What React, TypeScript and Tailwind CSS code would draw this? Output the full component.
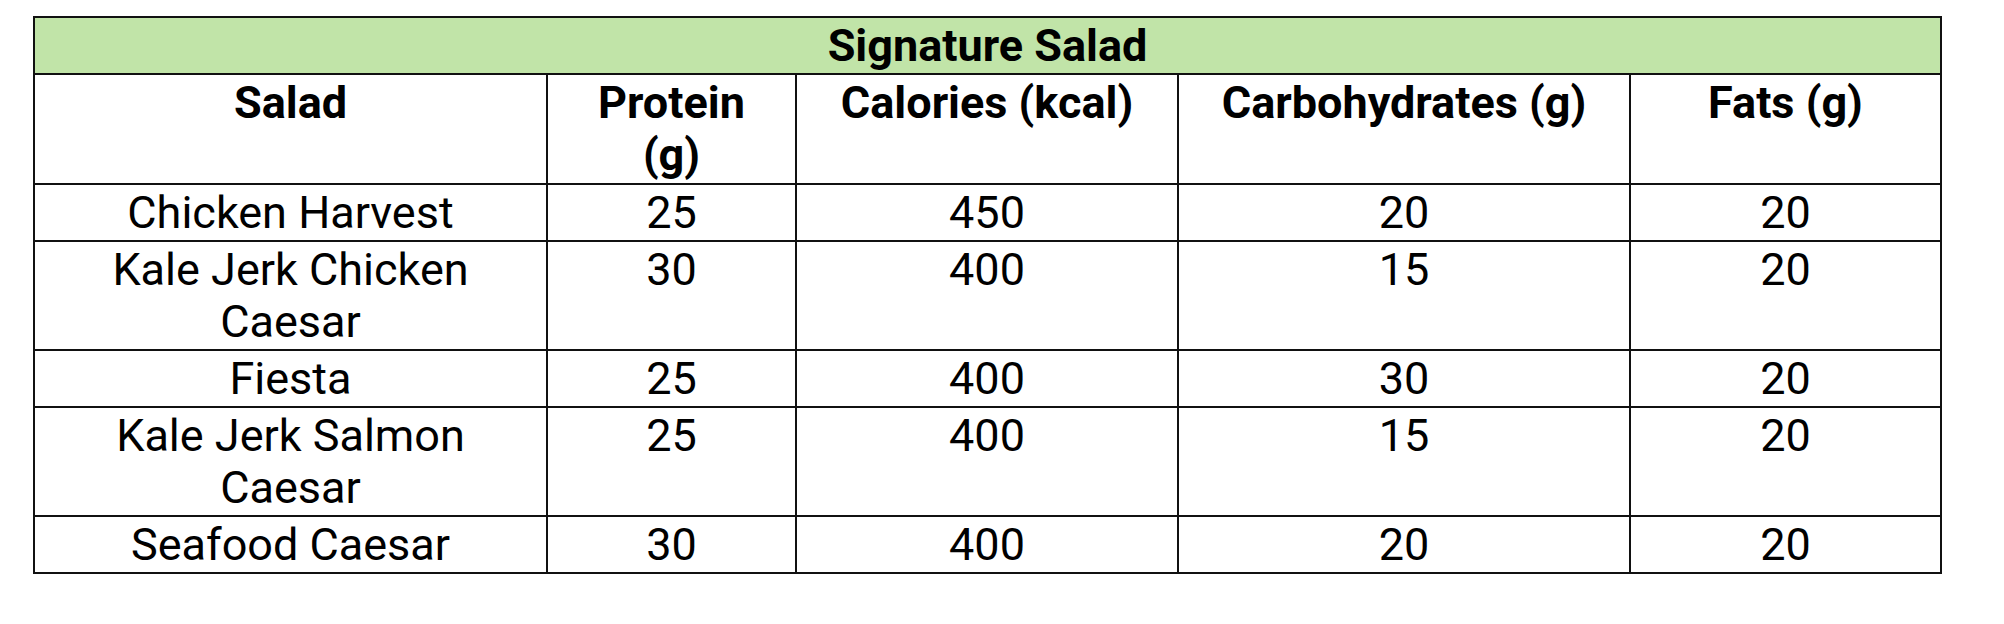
import React from 'react';

const rows = [
  { name: "Chicken Harvest", protein: 25, calories: 450, carbs: 20, fats: 20 },
  { name: "Kale Jerk Chicken Caesar", protein: 30, calories: 400, carbs: 15, fats: 20 },
  { name: "Fiesta", protein: 25, calories: 400, carbs: 30, fats: 20 },
  { name: "Kale Jerk Salmon Caesar", protein: 25, calories: 400, carbs: 15, fats: 20 },
  { name: "Seafood Caesar", protein: 30, calories: 400, carbs: 20, fats: 20 },
];

const headers = ["Salad", "Protein (g)", "Calories (kcal)", "Carbohydrates (g)", "Fats (g)"];

const cell = "border-2 border-[#111] px-6 pt-[2px] pb-[1px] align-top text-center";

const App = () => {
  return (
    <div className="min-h-screen bg-white pt-[16px] pl-[33px] font-['Roboto',sans-serif] text-[45px] leading-[52px] text-black">
      <table className="table-fixed border-collapse w-[1907px]">
        <colgroup>
          <col className="w-[513px]" />
          <col className="w-[249px]" />
          <col className="w-[382px]" />
          <col className="w-[452px]" />
          <col className="w-[311px]" />
        </colgroup>
        <thead>
          <tr>
            <th colSpan={5} className={cn(cell, "bg-[#c1e4a8] font-bold")}>
              Signature Salad
            </th>
          </tr>
          <tr>
            {headers.map((h) => (
              <th key={h} className={cn(cell, "font-bold pb-[2px]")}>
                {h}
              </th>
            ))}
          </tr>
        </thead>
        <tbody>
          {rows.map((r) => (
            <tr key={r.name}>
              <td className={cell}>{r.name}</td>
              <td className={cell}>{r.protein}</td>
              <td className={cell}>{r.calories}</td>
              <td className={cell}>{r.carbs}</td>
              <td className={cell}>{r.fats}</td>
            </tr>
          ))}
        </tbody>
      </table>
    </div>
  );
};

function cn(...c: string[]) {
  return c.join(" ");
}

export default App;
